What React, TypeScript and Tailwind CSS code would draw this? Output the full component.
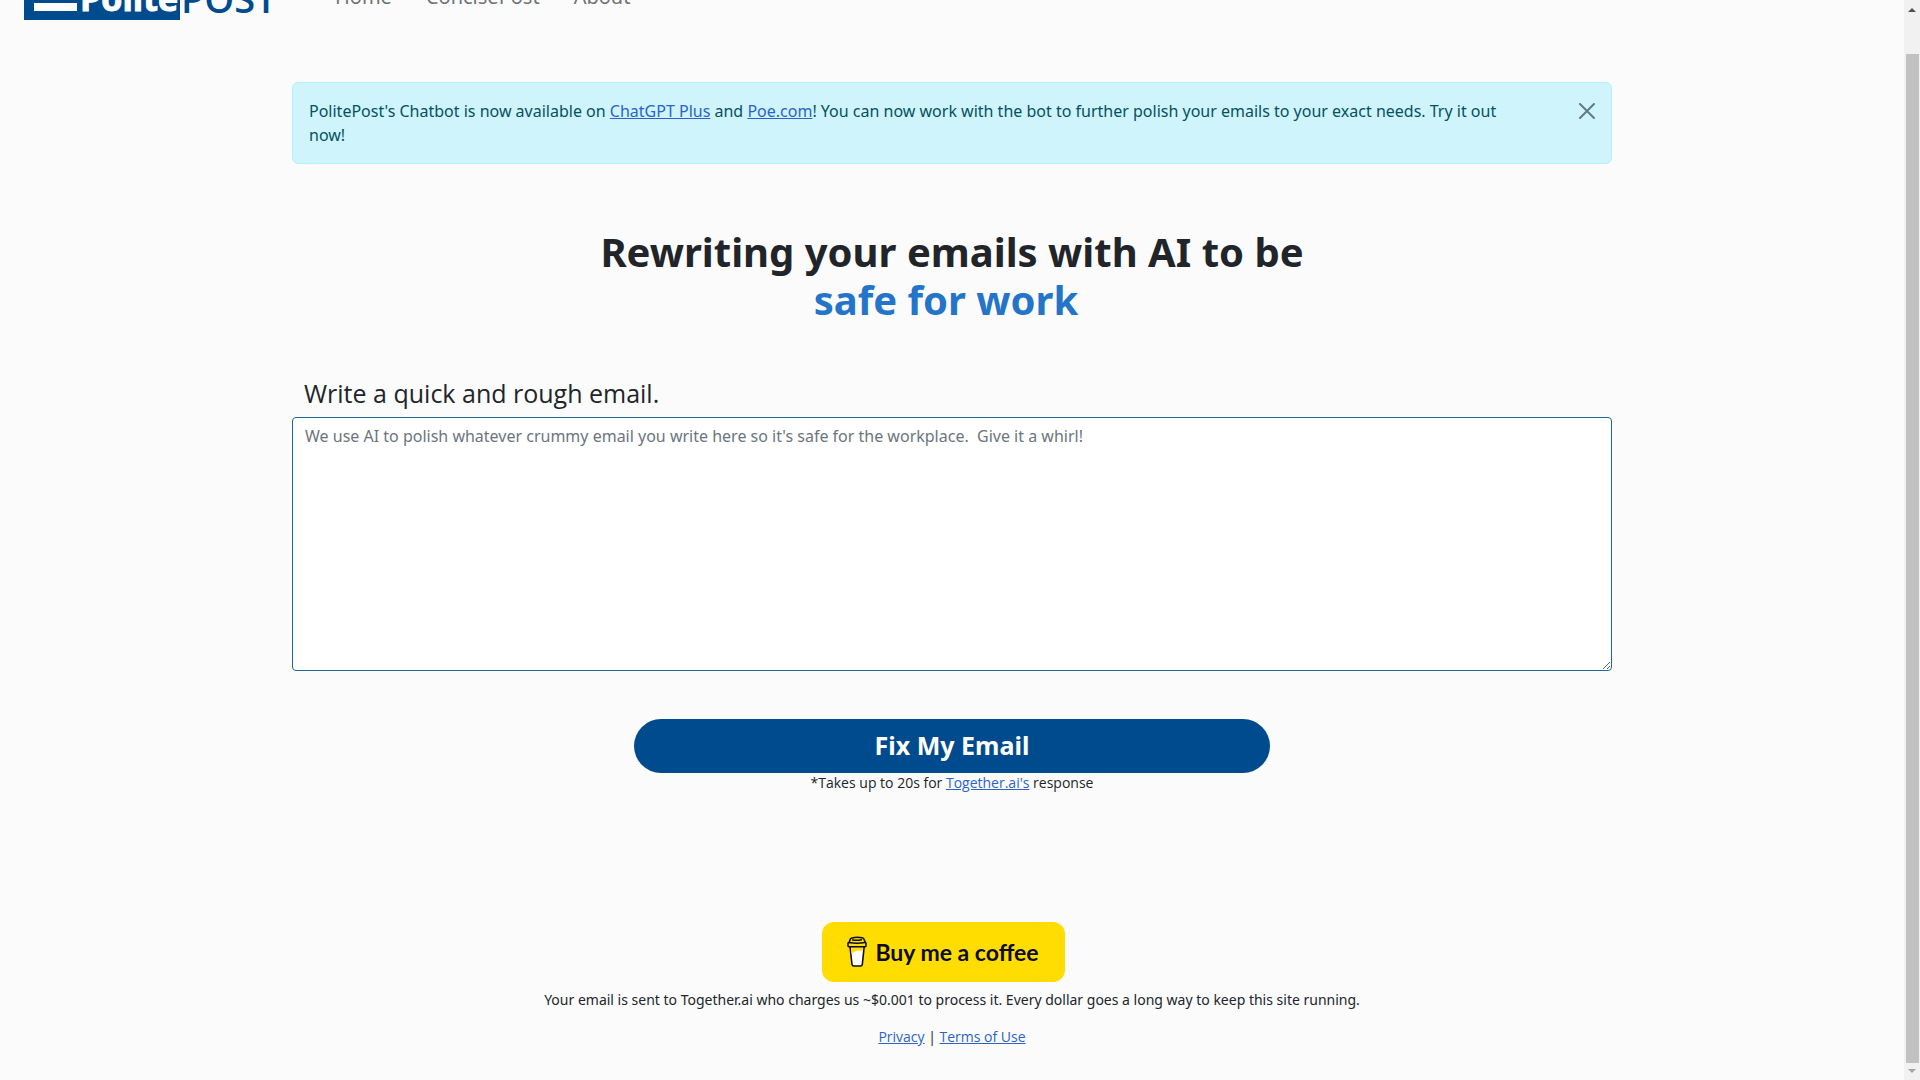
const link = "text-[#2b63c9] underline";

function Logo() {
  return (
    <svg className="h-16 w-[250px] shrink-0" viewBox="0 0 250 64" role="img" aria-label="PolitePost">
      <rect x="0" y="0" width="156" height="64" fill="#004b8d" />
      <rect x="10" y="20" width="43" height="8" fill="#fff" />
      <rect x="10" y="33" width="43" height="8" fill="#fff" />
      <rect x="10" y="47" width="43" height="8" fill="#fff" />
      <text x="56" y="55" fontSize="34" fontWeight="700" fill="#fff" stroke="#fff" fontFamily="Open Sans, sans-serif">Polite</text>
      <text x="157" y="57" fontSize="38" fontWeight="600" fill="#004b8d" fontFamily="Open Sans, sans-serif">POST</text>
    </svg>
  );
}

function Cup() {
  return (
    <svg className="h-8 w-5" viewBox="0 0 20 32" aria-hidden="true">
      <path d="M3 10.500 5 28.500Q5.200 30 7 30h6.500q1.600 0 1.800-1.500L17.200 10.500Z" fill="#fff" stroke="#0d0c22" strokeWidth="1.600" strokeLinejoin="round" />
      <path d="M4 11.500h12.200l-.5 3.500Q9 13 4.500 18Z" fill="#fd0" />
      <path d="M1.500 6.500Q1 6.500 1 7.200v2.600q0 .9.900.9h16.200q.9 0 .9-.9V7.200q0-.7-.6-.7L17 3.200Q16.700 2 15 1.700 9.500.8 5 2 3.500 2.400 3.200 3.300L2.200 6.400Z" fill="#fd0" stroke="#0d0c22" strokeWidth="1.600" strokeLinejoin="round" />
      <path d="M2 6.600q8 1.200 16 0M5.500 3.900q4.500 1 9-.2" fill="none" stroke="#0d0c22" strokeWidth="1.500" strokeLinecap="round" />
    </svg>
  );
}

function Scrollbar() {
  return (
    <div className="flex w-4 shrink-0 flex-col items-center bg-[#f1f1f1]" aria-hidden="true">
      <div className="flex h-[54px] w-full justify-center pt-2">
        <svg className="h-1 w-2" viewBox="0 0 8 4"><path d="M0 4 4 0l4 4Z" fill="#505050" /></svg>
      </div>
      <div className="w-[13px] flex-1 bg-[#c1c1c1]" />
      <div className="flex h-[17px] w-full justify-center pt-1.5">
        <svg className="h-1 w-2" viewBox="0 0 8 4"><path d="M0 0h8L4 4Z" fill="#a3a3a3" /></svg>
      </div>
    </div>
  );
}

export default function App() {
  return (
    <div className="flex min-h-screen bg-[#fbfbfb] font-['Noto_Sans',sans-serif] text-base text-[#212529]">
      <div className="min-w-0 flex-1">
        <header className="flex h-5 items-end gap-[61px] overflow-hidden pl-6">
          <Logo />
          <nav className="flex gap-[34px] pb-[9px] text-xl text-[#707274]">
            <a href="#home">Home</a>
            <a href="#concise">ConcisePost</a>
            <a href="#about">About</a>
          </nav>
        </header>

        <main className="mx-auto flex max-w-[1320px] flex-col items-center pt-[62px]">
          <div role="alert" className="flex w-full items-start justify-between rounded-md border border-[#b6effb] bg-[#cff4fc] p-4 leading-6 text-[#055160]">
            <p className="max-w-[1220px]">
              PolitePost's Chatbot is now available on <a href="#chatgpt" className={link}>ChatGPT Plus</a> and{" "}
              <a href="#poe" className={link}>Poe.com</a>! You can now work with the bot to further polish your emails to your exact needs. Try it out now!
            </p>
            <button type="button" aria-label="Close" className="mt-1 p-0">
              <svg className="size-4" viewBox="0 0 16 16"><path d="m1 1 14 14M15 1 1 15" stroke="#5f7c82" strokeWidth="2" strokeLinecap="round" /></svg>
            </button>
          </div>

          <h1 className="mt-16 text-center text-[40px] leading-[48px] font-bold">
            Rewriting your emails with AI to be
            <br />
            <span className="pr-3 text-[#2475c9]">safe for work</span>
          </h1>

          <label htmlFor="email" className="mt-[53px] w-full px-3 pb-2 font-['Open_Sans',sans-serif] text-[25px] leading-8">
            Write a quick and rough email.
          </label>
          <textarea
            id="email"
            className="h-[254px] w-full rounded border border-[#1d689b] bg-white px-3 py-1.5 leading-6 placeholder:text-[#6c757d]"
            placeholder="We use AI to polish whatever crummy email you write here so it's safe for the workplace.  Give it a whirl!"
          />

          <button type="button" className="mt-12 h-[54px] w-[636px] rounded-full bg-[#004b8d] text-[25px] font-bold text-white">
            Fix My Email
          </button>
          <p className="font-['Open_Sans',sans-serif] text-sm leading-5">
            *Takes up to 20s for <a href="#together" className={link}>Together.ai's</a> response
          </p>

          <a href="#coffee" className="mt-[129px] mr-[18px] flex h-[60px] w-[243px] items-center justify-center gap-2 rounded-xl bg-[#fd0] font-[Lato,sans-serif] text-[23px] font-bold text-[#0d0c22]">
            <Cup />
            Buy me a coffee
          </a>
          <p className="mt-2 text-sm leading-5">
            Your email is sent to Together.ai who charges us ~$0.001 to process it. Every dollar goes a long way to keep this site running.
          </p>
          <footer className="mt-[17px] font-['Open_Sans',sans-serif] text-sm leading-5">
            <a href="#privacy" className={link}>Privacy</a> | <a href="#terms" className={link}>Terms of Use</a>
          </footer>
        </main>
      </div>
      <Scrollbar />
    </div>
  );
}
